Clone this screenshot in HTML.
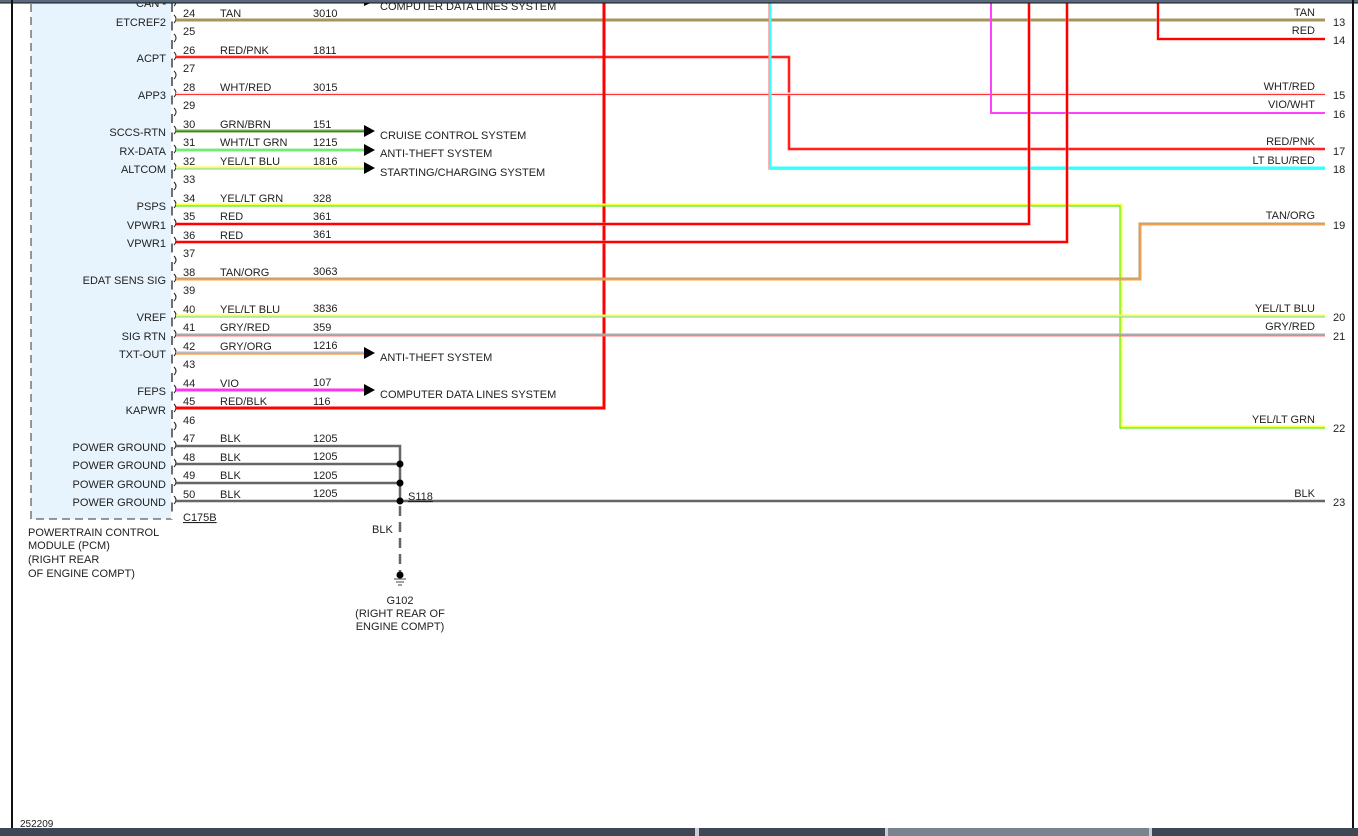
<!DOCTYPE html>
<html><head><meta charset="utf-8"><style>
html,body{margin:0;padding:0;background:#fff;}
svg{display:block;font-family:"Liberation Sans",sans-serif;font-size:11px;}
</style></head><body>
<svg width="1358" height="836" viewBox="0 0 1358 836" xmlns="http://www.w3.org/2000/svg">
<rect x="0" y="0" width="1358" height="836" fill="#fff"/>
<rect x="31" y="-5" width="141" height="524" fill="#e8f4fd" stroke="#333" stroke-width="1" stroke-dasharray="8,5"/>
<line x1="172" y1="0" x2="172" y2="519" stroke="#fff" stroke-width="2"/>
<line x1="172" y1="0" x2="172" y2="512" stroke="#222" stroke-width="1.3" stroke-dasharray="9,9.5" stroke-dashoffset="-3"/>
<g fill="none" stroke="#222" stroke-width="1">
<path d="M174 -2 q4 4 0 8"/><path d="M174 15 q4 4 0 8"/><path d="M174 34 q4 4 0 8"/><path d="M174 52 q4 4 0 8"/><path d="M174 71 q4 4 0 8"/><path d="M174 89 q4 4 0 8"/><path d="M174 108 q4 4 0 8"/><path d="M174 126 q4 4 0 8"/><path d="M174 145 q4 4 0 8"/><path d="M174 163 q4 4 0 8"/><path d="M174 182 q4 4 0 8"/><path d="M174 200 q4 4 0 8"/><path d="M174 219 q4 4 0 8"/><path d="M174 237 q4 4 0 8"/><path d="M174 256 q4 4 0 8"/><path d="M174 274 q4 4 0 8"/><path d="M174 293 q4 4 0 8"/><path d="M174 311 q4 4 0 8"/><path d="M174 330 q4 4 0 8"/><path d="M174 348 q4 4 0 8"/><path d="M174 367 q4 4 0 8"/><path d="M174 385 q4 4 0 8"/><path d="M174 404 q4 4 0 8"/><path d="M174 422 q4 4 0 8"/><path d="M174 441 q4 4 0 8"/><path d="M174 459 q4 4 0 8"/><path d="M174 478 q4 4 0 8"/><path d="M174 496 q4 4 0 8"/>
</g>
<g fill="none" stroke-linejoin="miter">
<path d="M176 20 H1325" stroke="#a8935a" stroke-width="3"/>
<path d="M1158 0 V39 H1325" stroke="#ff9999" stroke-width="3"/><path d="M1158 0 V39 H1325" stroke="#f00" stroke-width="2"/>
<path d="M176 57 H789 V149 H1325" stroke="#ff8080" stroke-width="3"/><path d="M176 57 H789 V149 H1325" stroke="#f00" stroke-width="1.5"/>
<path d="M176 94 H1325" stroke="#e4e4e4" stroke-width="3"/><path d="M176 94.5 H1325" stroke="#f33" stroke-width="1"/>
<path d="M991 0 V113 H1325" stroke="#ff40ff" stroke-width="2"/>
<path d="M770 0 V168 H1325" stroke="#33ffff" stroke-width="3"/><path d="M768.7 0 V169.3 H1325" stroke="#f88" stroke-width="0.7"/>
<path d="M604 0 V408 H176" stroke="#f00" stroke-width="3"/>
<path d="M176 131 H364" stroke="#66bb55" stroke-width="3"/><path d="M176 131.5 H364" stroke="#8a5a1a" stroke-width="1.2"/>
<path d="M176 150 H364" stroke="#88ee88" stroke-width="3"/><path d="M176 150 H364" stroke="#55ee55" stroke-width="1"/>
<path d="M176 168 H364" stroke="#ffff33" stroke-width="3"/><path d="M176 169 H364" stroke="#66ccee" stroke-width="1"/>
<path d="M176 205 H1121 V427 H1325" stroke="#ffff44" stroke-width="3"/><path d="M176 206 H1120 V428 H1325" stroke="#55ee22" stroke-width="1.2"/>
<path d="M176 224 H1029 V0" stroke="#ff7777" stroke-width="3"/><path d="M176 224 H1029 V0" stroke="#f00" stroke-width="2"/>
<path d="M176 242 H1067 V0" stroke="#ff7777" stroke-width="3"/><path d="M176 242 H1067 V0" stroke="#f00" stroke-width="2"/>
<path d="M176 279 H1140 V224 H1325" stroke="#f0a050" stroke-width="3"/><path d="M176 278 H1139 V223 H1325" stroke="#b8a070" stroke-width="1"/>
<path d="M176 316 H1325" stroke="#ffff33" stroke-width="3"/><path d="M176 317 H1325" stroke="#66ccee" stroke-width="1"/>
<path d="M176 335 H1325" stroke="#aaa" stroke-width="3"/><path d="M176 336 H1325" stroke="#ff7777" stroke-width="1"/>
<path d="M176 353 H364" stroke="#bbb" stroke-width="3"/><path d="M176 354 H364" stroke="#ff9933" stroke-width="1.2"/>
<path d="M176 390 H364" stroke="#ff33ee" stroke-width="3"/>
<path d="M176 408 H604" stroke="#f00" stroke-width="2"/>
<g stroke="#666" stroke-width="2.5">
<path d="M176 446 H400 V501"/><path d="M176 464 H400"/><path d="M176 483 H400"/><path d="M176 501 H1325"/>
</g>
<path d="M400 506 V572" stroke="#666" stroke-width="2.5" stroke-dasharray="10,6"/>
</g>
<g fill="#000">
<circle cx="400" cy="464" r="3.5"/><circle cx="400" cy="483" r="3.5"/><circle cx="400" cy="501" r="3.5"/><circle cx="400" cy="575" r="3.5"/>
<polygon points="364,-2 375,3 364,8" transform="translate(0,-2)"/>
<polygon points="364,125 375,131 364,137"/><polygon points="364,144 375,150 364,156"/><polygon points="364,162 375,168 364,174"/>
<polygon points="364,347 375,353 364,359"/><polygon points="364,384 375,390 364,396"/>
</g>
<g stroke="#444" stroke-width="1"><line x1="394" y1="579" x2="406" y2="579"/><line x1="396" y1="582" x2="404" y2="582"/><line x1="398" y1="585" x2="402" y2="585"/></g>
<g fill="#222" text-anchor="end">
<text x="166" y="7">CAN -</text>
<text x="166" y="26">ETCREF2</text><text x="166" y="62">ACPT</text><text x="166" y="99">APP3</text>
<text x="166" y="136">SCCS-RTN</text><text x="166" y="155">RX-DATA</text><text x="166" y="173">ALTCOM</text>
<text x="166" y="210">PSPS</text><text x="166" y="229">VPWR1</text><text x="166" y="247">VPWR1</text>
<text x="166" y="284">EDAT SENS SIG</text><text x="166" y="321">VREF</text><text x="166" y="340">SIG RTN</text>
<text x="166" y="358">TXT-OUT</text><text x="166" y="395">FEPS</text><text x="166" y="414">KAPWR</text>
<text x="166" y="451">POWER GROUND</text><text x="166" y="469">POWER GROUND</text><text x="166" y="488">POWER GROUND</text><text x="166" y="506">POWER GROUND</text>
</g>
<g fill="#222">
<text x="183" y="17">24</text><text x="220" y="17">TAN</text><text x="313" y="17">3010</text>
<text x="183" y="35">25</text>
<text x="183" y="54">26</text><text x="220" y="54">RED/PNK</text><text x="313" y="54">1811</text>
<text x="183" y="72">27</text>
<text x="183" y="91">28</text><text x="220" y="91">WHT/RED</text><text x="313" y="91">3015</text>
<text x="183" y="109">29</text>
<text x="183" y="128">30</text><text x="220" y="128">GRN/BRN</text><text x="313" y="128">151</text>
<text x="183" y="146">31</text><text x="220" y="146">WHT/LT GRN</text><text x="313" y="146">1215</text>
<text x="183" y="165">32</text><text x="220" y="165">YEL/LT BLU</text><text x="313" y="165">1816</text>
<text x="183" y="183">33</text>
<text x="183" y="202">34</text><text x="220" y="202">YEL/LT GRN</text><text x="313" y="202">328</text>
<text x="183" y="220">35</text><text x="220" y="220">RED</text><text x="313" y="220">361</text>
<text x="183" y="239">36</text><text x="220" y="239">RED</text><text x="313" y="238">361</text>
<text x="183" y="257">37</text>
<text x="183" y="276">38</text><text x="220" y="276">TAN/ORG</text><text x="313" y="275">3063</text>
<text x="183" y="294">39</text>
<text x="183" y="313">40</text><text x="220" y="313">YEL/LT BLU</text><text x="313" y="312">3836</text>
<text x="183" y="331">41</text><text x="220" y="331">GRY/RED</text><text x="313" y="331">359</text>
<text x="183" y="350">42</text><text x="220" y="350">GRY/ORG</text><text x="313" y="349">1216</text>
<text x="183" y="368">43</text>
<text x="183" y="387">44</text><text x="220" y="387">VIO</text><text x="313" y="386">107</text>
<text x="183" y="405">45</text><text x="220" y="405">RED/BLK</text><text x="313" y="405">116</text>
<text x="183" y="424">46</text>
<text x="183" y="442">47</text><text x="220" y="442">BLK</text><text x="313" y="442">1205</text>
<text x="183" y="461">48</text><text x="220" y="461">BLK</text><text x="313" y="460">1205</text>
<text x="183" y="479">49</text><text x="220" y="479">BLK</text><text x="313" y="479">1205</text>
<text x="183" y="498">50</text><text x="220" y="498">BLK</text><text x="313" y="497">1205</text>
<text x="183" y="521" text-decoration="underline">C175B</text>
<text x="408" y="500" text-decoration="underline">S118</text>
<text x="372" y="533">BLK</text>
<text x="400" y="604" text-anchor="middle">G102</text>
<text x="400" y="617" text-anchor="middle">(RIGHT REAR OF</text>
<text x="400" y="630" text-anchor="middle">ENGINE COMPT)</text>
<text x="28" y="536">POWERTRAIN CONTROL</text><text x="28" y="549">MODULE (PCM)</text><text x="28" y="563">(RIGHT REAR</text><text x="28" y="577">OF ENGINE COMPT)</text>
<text x="380" y="10">COMPUTER DATA LINES SYSTEM</text>
<text x="380" y="139">CRUISE CONTROL SYSTEM</text>
<text x="380" y="157">ANTI-THEFT SYSTEM</text>
<text x="380" y="176">STARTING/CHARGING SYSTEM</text>
<text x="380" y="361">ANTI-THEFT SYSTEM</text>
<text x="380" y="398">COMPUTER DATA LINES SYSTEM</text>
<text x="20" y="827" font-size="10">252209</text>
</g>
<g fill="#222">
<g text-anchor="end">
<text x="1315" y="16">TAN</text><text x="1315" y="34">RED</text><text x="1315" y="90">WHT/RED</text><text x="1315" y="108">VIO/WHT</text>
<text x="1315" y="145">RED/PNK</text><text x="1315" y="164">LT BLU/RED</text><text x="1315" y="219">TAN/ORG</text>
<text x="1315" y="312">YEL/LT BLU</text><text x="1315" y="330">GRY/RED</text><text x="1315" y="423">YEL/LT GRN</text><text x="1315" y="497">BLK</text>
</g>
<text x="1333" y="26">13</text><text x="1333" y="44">14</text><text x="1333" y="99">15</text><text x="1333" y="118">16</text>
<text x="1333" y="155">17</text><text x="1333" y="173">18</text><text x="1333" y="229">19</text><text x="1333" y="321">20</text>
<text x="1333" y="340">21</text><text x="1333" y="432">22</text><text x="1333" y="506">23</text>
</g>
<rect x="0" y="0" width="1358" height="2.5" fill="#5a6a7e"/>
<rect x="0" y="2.5" width="1358" height="1" fill="#111"/>
<rect x="11" y="0" width="2" height="828" fill="#111"/>
<rect x="1352" y="0" width="2" height="828" fill="#111"/>
<rect x="0" y="828" width="1358" height="8" fill="#ccc"/>
<rect x="0" y="828" width="695" height="8" fill="#3d4756"/>
<rect x="699" y="828" width="186" height="8" fill="#3d4756"/>
<rect x="888" y="828" width="261" height="8" fill="#778490"/>
<rect x="1152" y="828" width="206" height="8" fill="#3d4756"/>
</svg>
</body></html>
